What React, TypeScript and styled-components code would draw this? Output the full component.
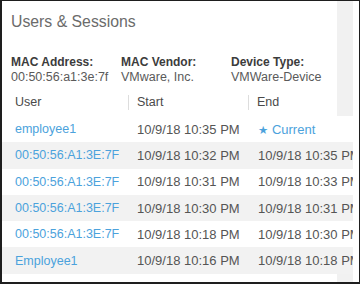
import React from 'react';
import styled, { createGlobalStyle } from 'styled-components';

type Session = {
  user: string;
  start: string;
  end: string | null;
};

const sessions: Session[] = [
  { user: 'employee1', start: '10/9/18 10:35 PM', end: null },
  { user: '00:50:56:A1:3E:7F', start: '10/9/18 10:32 PM', end: '10/9/18 10:35 PM' },
  { user: '00:50:56:A1:3E:7F', start: '10/9/18 10:31 PM', end: '10/9/18 10:33 PM' },
  { user: '00:50:56:A1:3E:7F', start: '10/9/18 10:30 PM', end: '10/9/18 10:31 PM' },
  { user: '00:50:56:A1:3E:7F', start: '10/9/18 10:18 PM', end: '10/9/18 10:30 PM' },
  { user: 'Employee1', start: '10/9/18 10:16 PM', end: '10/9/18 10:18 PM' },
];

const info = [
  { label: 'MAC Address:', value: '00:50:56:a1:3e:7f' },
  { label: 'MAC Vendor:', value: 'VMware, Inc.' },
  { label: 'Device Type:', value: 'VMWare-Device' },
];

const App = () => {
  return (
    <>
      <GlobalStyle />
      <Frame>
        <Main>
          <Title>Users &amp; Sessions</Title>
          <InfoGrid>
            {info.map((item) => (
              <Label key={item.label}>{item.label}</Label>
            ))}
            {info.map((item) => (
              <Value key={item.value}>{item.value}</Value>
            ))}
          </InfoGrid>
          <Table>
            <colgroup>
              <col style={{ width: 126 }} />
              <col style={{ width: 120 }} />
              <col style={{ width: 120 }} />
            </colgroup>
            <thead>
              <tr>
                <HeadCell $first>
                  <HeadLabel $first>User</HeadLabel>
                </HeadCell>
                <HeadCell>
                  <HeadLabel>Start</HeadLabel>
                </HeadCell>
                <HeadCell>
                  <HeadLabel>End</HeadLabel>
                </HeadCell>
              </tr>
            </thead>
            <tbody>
              {sessions.map((s, i) => (
                <Row key={i} $striped={i % 2 === 1}>
                  <UserCell>{s.user}</UserCell>
                  <Cell>{s.start}</Cell>
                  {s.end ? (
                    <Cell $last>{s.end}</Cell>
                  ) : (
                    <Cell $last $current>
                      <Star>★</Star> Current
                    </Cell>
                  )}
                </Row>
              ))}
            </tbody>
          </Table>
        </Main>
      </Frame>
    </>
  );
};

const GlobalStyle = createGlobalStyle`
  html, body {
    margin: 0;
    padding: 0;
    background: #ffffff;
  }
  body {
    font-family: 'Liberation Sans', Arial, sans-serif;
  }
`;

const Frame = styled.div`
  width: 360px;
  height: 284px;
  box-sizing: border-box;

  display: flex;
  padding-right: 6px;

  background: #ffffff;
  border-style: solid;
  border-color: #1e1e1e;
  border-width: 1px 1px 2px 2px;
`;

// the grey strip on the right sits behind the rows
const Main = styled.div`
  flex: 1;
  min-width: 0;
  overflow: hidden;

  display: flex;
  flex-direction: column;

  background: linear-gradient(to right, #ffffff 335px, #f1f1f1 335px);
`;

const Title = styled.h1`
  margin: 0;
  padding: 12px 0 0 9px;

  font-size: 15.8px;
  line-height: 18px;
  font-weight: 400;
  color: #6b6b6b;
`;

const InfoGrid = styled.div`
  display: grid;
  grid-template-columns: 110px 110px 1fr;
  row-gap: 1px;

  margin-top: 24px;
  padding-left: 9px;
`;

const Label = styled.div`
  font-size: 12px;
  line-height: 14px;
  font-weight: 700;
  color: #3c3c3c;
  white-space: nowrap;
`;

const Value = styled.div`
  font-size: 12.5px;
  line-height: 14px;
  color: #5a5a5a;
  white-space: nowrap;
`;

const Table = styled.table`
  width: 366px;
  margin-top: 5px;
  table-layout: fixed;
  border-collapse: collapse;

  font-size: 12.5px;
  white-space: nowrap;
`;

const HeadCell = styled.th<{ $first?: boolean }>`
  height: 27px;
  padding: 0 0 0 ${({ $first }) => ($first ? '13px' : '0')};

  text-align: left;
  font-weight: 400;
  color: #4a4a4a;
`;

const HeadLabel = styled.span<{ $first?: boolean }>`
  display: inline-block;
  line-height: 15px;
  padding-left: ${({ $first }) => ($first ? '0' : '8px')};
  border-left: ${({ $first }) => ($first ? 'none' : '1px solid #dddddd')};
`;

const Row = styled.tr<{ $striped: boolean }>`
  height: 26.3px;
  background: ${({ $striped }) => ($striped ? '#f2f2f2' : '#ffffff')};
`;

const UserCell = styled.td`
  padding: 0 0 0 13px;
  color: #4ba2dc;
  overflow: hidden;
`;

const Cell = styled.td<{ $last?: boolean; $current?: boolean }>`
  padding: 0 0 0 ${({ $last }) => ($last ? '10px' : '9px')};
  color: ${({ $current }) => ($current ? '#4ba2dc' : '#555555')};
  font-size: 13px;
`;

const Star = styled.span`
  font-family: 'DejaVu Sans', sans-serif;
  font-size: 11.5px;
`;

export default App;
